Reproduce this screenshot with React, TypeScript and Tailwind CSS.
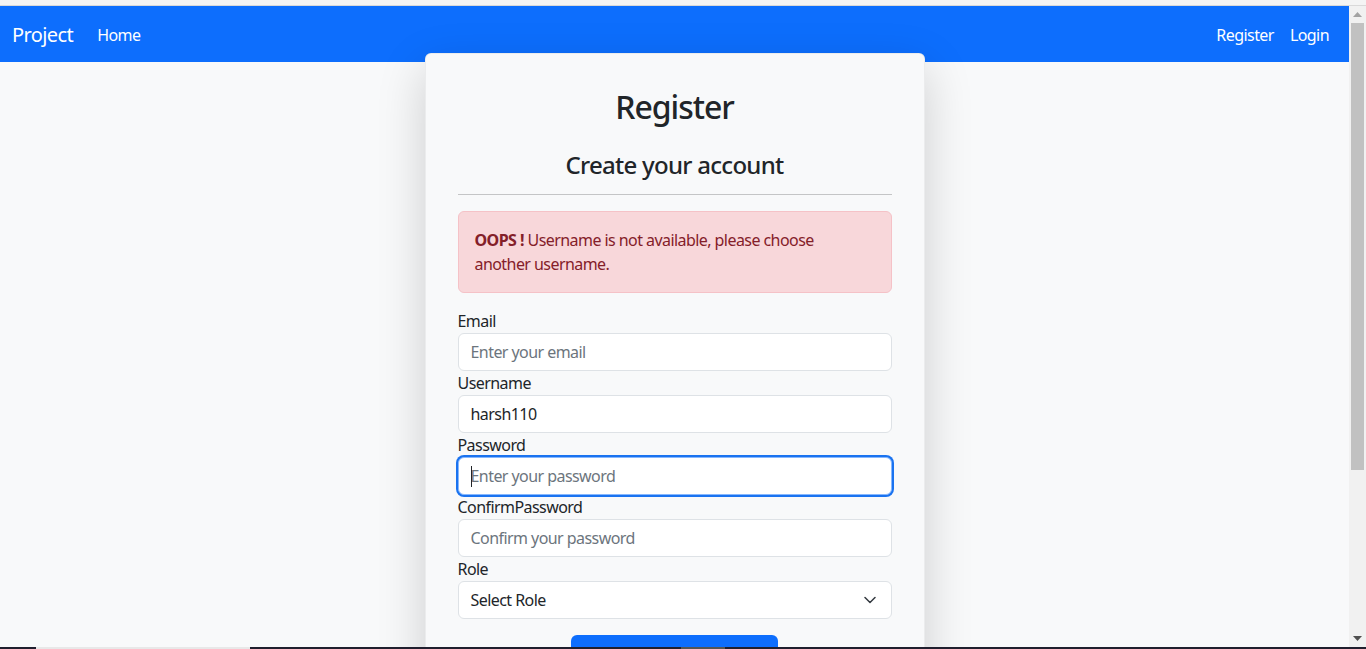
import React from "react";

const font = { fontFamily: '"Noto Sans", "Liberation Sans", sans-serif' };

function Field({ label, children }: { label: string; children: React.ReactNode }) {
  return (
    <div className="flex flex-col">
      <label className="text-[16px] leading-[24px] text-[#212529]">{label}</label>
      {children}
    </div>
  );
}

export default function App() {
  return (
    <div
      className="w-[1366px] h-[649px] overflow-hidden flex flex-col bg-[#f8f9fa] tracking-[-0.035em]"
      style={font}
    >
      <div className="h-[6px] bg-[#f4f4f4] border-b border-[#d9d9d9] shrink-0" />
      <div className="flex-1 flex min-h-0">
        <div className="flex-1 flex flex-col min-w-0 overflow-hidden">
          <nav className="h-[56px] shrink-0 bg-[#0d6efd] flex items-center px-3 text-white">
            <span className="text-[20px] leading-[30px] mr-4 tracking-[-0.03em] pt-px">Project</span>
            <span className="px-2 text-[16px] leading-[24px] pt-px">Home</span>
            <div className="ml-auto flex pt-px">
              <span className="px-2 text-[16px] leading-[24px]">Register</span>
              <span className="px-2 text-[16px] leading-[24px]">Login</span>
            </div>
          </nav>
          <div className="flex justify-center -mt-[9px] relative z-10">
            <div className="w-[500px] bg-[#f8f9fa] rounded-md border border-black/5 shadow-[0_16px_48px_rgba(0,0,0,0.175)] px-[32px] pt-[34px] pb-8 text-[#212529]">
              <h1 className="text-center text-[32px] leading-[38px] font-medium tracking-[-0.032em]">
                Register
              </h1>
              <h2 className="text-center text-[24px] leading-[29px] font-medium mt-6 tracking-[-0.03em]">
                Create your account
              </h2>
              <hr className="mt-[15px] mb-4 border-0 border-t border-[#c4c5c6]" />
              <div className="rounded-md border border-[#f5c2c7] bg-[#f8d7da] text-[#842029] p-4 text-[16px] leading-[24px]">
                <p>
                  <b className="font-bold">OOPS !</b> Username is not available, please choose
                </p>
                <p>another username.</p>
              </div>
              <div className="mt-4 flex flex-col">
                <Field label="Email">
                  <input
                    className="h-[38px] rounded-md border border-[#dee2e6] bg-white px-3 text-[16px] text-[#212529] placeholder:text-[#6c757d] outline-none"
                    placeholder="Enter your email"
                  />
                </Field>
                <Field label="Username">
                  <input
                    className="h-[38px] rounded-md border border-[#dee2e6] bg-white px-3 text-[16px] text-[#212529] outline-none"
                    defaultValue="harsh110"
                  />
                </Field>
                <Field label="Password">
                  <div className="h-[38px] rounded-md border border-[#86b7fe] bg-white px-3 flex items-center shadow-[0_0_0_2px_#1a73f0] relative">
                    <span className="absolute left-[12px] top-[8px] w-px h-[21px] bg-[#212529]" />
                    <span className="text-[16px] text-[#6c757d]">Enter your password</span>
                  </div>
                </Field>
                <Field label="ConfirmPassword">
                  <input
                    className="h-[38px] rounded-md border border-[#dee2e6] bg-white px-3 text-[16px] text-[#212529] placeholder:text-[#6c757d] outline-none"
                    placeholder="Confirm your password"
                  />
                </Field>
                <Field label="Role">
                  <div className="h-[38px] rounded-md border border-[#dee2e6] bg-white pl-3 pr-[15px] flex items-center justify-between">
                    <span className="text-[16px] text-[#212529]">Select Role</span>
                    <svg width="12" height="8" viewBox="0 0 12 8">
                      <path
                        d="M1 1.5l5 5 5-5"
                        fill="none"
                        stroke="#343a40"
                        strokeWidth="1.5"
                        strokeLinecap="round"
                        strokeLinejoin="round"
                      />
                    </svg>
                  </div>
                </Field>
              </div>
              <div className="flex justify-center mt-4">
                <button className="w-[207px] h-[38px] rounded-md bg-[#0d6efd] text-white text-[16px]">
                  Register
                </button>
              </div>
            </div>
          </div>
        </div>
        <div className="w-[17px] shrink-0 bg-[#f1f1f1] flex flex-col items-center">
          <div className="h-[17px] flex items-center justify-center">
            <svg width="9" height="5" viewBox="0 0 9 5">
              <path d="M0 5L4.5 0L9 5Z" fill="#a3a3a3" />
            </svg>
          </div>
          <div className="w-[13px] h-[447px] bg-[#c1c1c1]" />
          <div className="flex-1" />
          <div className="h-[17px] flex items-center justify-center">
            <svg width="9" height="5" viewBox="0 0 9 5">
              <path d="M0 0L4.5 5L9 0Z" fill="#505050" />
            </svg>
          </div>
        </div>
      </div>
      <div className="h-[2px] shrink-0 bg-[#201f2e] flex">
        <div className="w-[36px]" />
        <div className="w-[214px] bg-[#e8e8e8]" />
        <div className="w-[431px]" />
        <div className="w-[44px] bg-[#555]" />
      </div>
    </div>
  );
}
